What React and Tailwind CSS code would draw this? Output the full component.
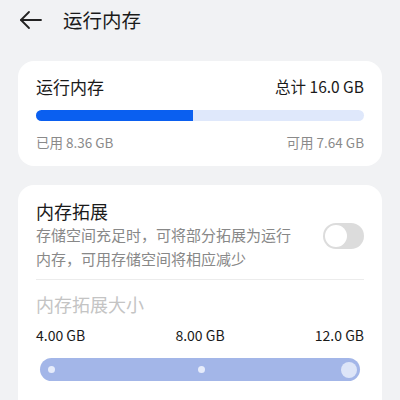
export default function App() {
  const font = { fontFamily: '"Noto Sans CJK SC", "Noto Sans", sans-serif' };
  return (
    <div className="w-[400px] h-[400px] overflow-hidden bg-[#f1f2f4] text-[#1a1a1a]" style={font}>
      <div className="h-[40px] flex items-center pl-[19px]">
        <svg width="24" height="20" viewBox="0 0 24 20" fill="none" stroke="#222" strokeWidth="1.8" strokeLinecap="round" strokeLinejoin="round">
          <path d="M22 10H2" />
          <path d="M10 2L2 10l8 8" />
        </svg>
        <span className="ml-[20px] text-[19.5px] leading-none">运行内存</span>
      </div>

      <div className="mx-[18px] mt-[21px] bg-white rounded-[16px] px-[18px] pt-[14px] pb-[15px]">
        <div className="flex justify-between items-center h-[24px]">
          <span className="text-[17px]">运行内存</span>
          <span className="text-[15.5px]">总计 16.0 GB</span>
        </div>
        <div className="mt-[11px] h-[11px] rounded-full bg-[#dfe8fb] overflow-hidden flex">
          <div className="w-[157px] h-full bg-[#0a5ff0]" />
        </div>
        <div className="mt-[12px] flex justify-between text-[13.5px] text-[#8a8a8a] leading-[18px]">
          <span>已用 8.36 GB</span>
          <span>可用 7.64 GB</span>
        </div>
      </div>

      <div className="mx-[18px] mt-[19px] bg-white rounded-[16px] px-[18px] pt-[14px] h-[240px]">
        <div className="flex items-center justify-between">
          <div className="w-[263px]">
            <div className="text-[18px] leading-[24px]">内存拓展</div>
            <div className="text-[15px] leading-[24px] text-[#888]">
              存储空间充足时，可将部分拓展为运行内存，可用存储空间将相应减少
            </div>
          </div>
          <div className="w-[41px] h-[26px] rounded-full bg-[#dcdcdc] p-[2px] flex items-center mt-[2px]">
            <div className="w-[22px] h-[22px] rounded-full bg-white" />
          </div>
        </div>
        <div className="mt-[8px] h-px bg-[#ececec]" />
        <div className="mt-[12px] text-[18px] leading-[24px] text-[#c4c4c4]">内存拓展大小</div>
        <div className="mt-[10px] flex justify-between text-[14px] leading-[18px] text-[#1a1a1a]">
          <span>4.00 GB</span>
          <span>8.00 GB</span>
          <span>12.0 GB</span>
        </div>
        <div className="mt-[14px] mx-[4px] h-[23px] rounded-full bg-[#a3b6e8] flex items-center justify-between px-[8px]">
          <div className="w-[7px] h-[7px] rounded-full bg-[#e6ecfb]" />
          <div className="w-[7px] h-[7px] rounded-full bg-[#e6ecfb] ml-[6px]" />
          <div className="w-[16px] h-[16px] rounded-full bg-[#dde5f8] mr-[-5px]" />
        </div>
      </div>
    </div>
  );
}
